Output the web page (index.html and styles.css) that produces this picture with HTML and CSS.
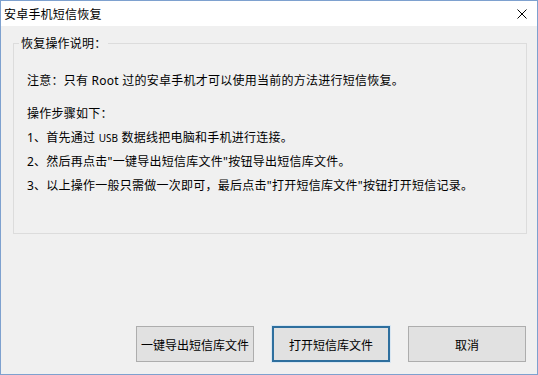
FILE: index.html
```html
<!DOCTYPE html>
<html lang="zh-CN">
<head>
<meta charset="utf-8">
<title>安卓手机短信恢复</title>
<link rel="stylesheet" href="styles.css">
</head>
<body>
<div class="window">
  <div class="titlebar">
    <span class="title">安卓手机短信恢复</span>
    <span class="close">
      <svg width="10" height="10" viewBox="0 0 10 10"><path d="M0.5 0.5 L9.5 9.5 M9.5 0.5 L0.5 9.5" stroke="#000" stroke-width="1" fill="none"/></svg>
    </span>
  </div>
  <div class="body">
    <fieldset class="group">
      <legend class="group-title">恢复操作说明：</legend>
      <p class="line note">注意：只有 Root 过的安卓手机才可以使用当前的方法进行短信恢复。</p>
      <p class="line head">操作步骤如下：</p>
      <p class="line">1、首先通过 <span class="small">USB</span> 数据线把电脑和手机进行连接。</p>
      <p class="line">2、然后再点击"一键导出短信库文件"按钮导出短信库文件。</p>
      <p class="line">3、以上操作一般只需做一次即可，最后点击"打开短信库文件"按钮打开短信记录。</p>
    </fieldset>
    <div class="buttons">
      <button class="btn">一键导出短信库文件</button>
      <button class="btn default">打开短信库文件</button>
      <button class="btn">取消</button>
    </div>
  </div>
</div>
</body>
</html>
```

FILE: styles.css
```css
* { box-sizing: border-box; }
html, body { margin: 0; padding: 0; }
body {
  width: 538px;
  height: 375px;
  font-family: "Noto Sans", "Noto Sans CJK SC", sans-serif;
  font-size: 12px;
  color: #000;
  background: #f0f0f0;
}
.window {
  width: 538px;
  height: 375px;
  border: 1px solid #7ea1cf;
  background: #f0f0f0;
  display: flex;
  flex-direction: column;
}
.titlebar {
  height: 25px;
  background: #fff;
  display: flex;
  align-items: center;
  justify-content: space-between;
  padding: 0 10px 0 3px;
  flex: none;
}
.title {
  font-family: "Noto Sans CJK SC", sans-serif;
  font-size: 12px;
  line-height: 16px;
  letter-spacing: 0.2px;
}
.close {
  display: flex;
  width: 10px;
  height: 10px;
}
.body {
  flex: 1;
  display: flex;
  flex-direction: column;
  padding: 9px 10px 12px 12px;
}
.group {
  margin: 0;
  padding: 0 0 0 13px;
  border: 1px solid #dcdcdc;
  height: 199px;
  min-width: 0;
}
.group-title {
  margin-left: -8px;
  padding: 0 2px;
  line-height: 16px;
  font-family: "Noto Sans CJK SC", sans-serif;
  letter-spacing: 0.2px;
}
.line {
  margin: 4px 0 0 0;
  line-height: 20px;
  white-space: nowrap;
  letter-spacing: 0.25px;
}
.note { margin-top: 20px; }
.head { margin-top: 13px; }
.small { font-size: 10px; letter-spacing: 0; }
.buttons {
  margin-top: auto;
  display: flex;
  justify-content: flex-end;
  gap: 18px;
  padding-right: 1px;
}
.btn {
  width: 118px;
  height: 36px;
  background: #e1e1e1;
  border: 1px solid #adadad;
  border-radius: 0;
  font-family: "Noto Sans CJK SC", sans-serif;
  font-size: 12px;
  color: #000;
  padding: 0;
  margin: 0;
}
.btn.default {
  border: 2px solid #2e6f9e;
  box-shadow: 0 0 0 1px #d8e6f2;
}
```
